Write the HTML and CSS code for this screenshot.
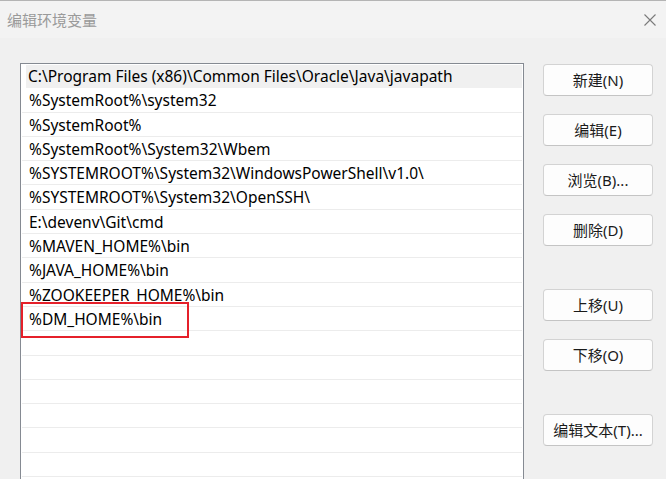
FILE: index.html
```html
<!DOCTYPE html>
<html lang="zh-CN">
<head>
<meta charset="utf-8">
<title>编辑环境变量</title>
<link rel="stylesheet" href="styles.css">
</head>
<body>
<div class="window">
  <div class="titlebar">
    <span class="title">编辑环境变量</span>
    <span class="close" aria-label="关闭">
      <svg width="12" height="12" viewBox="0 0 12 12"><path d="M0.5 0.5 L11.5 11.5 M11.5 0.5 L0.5 11.5" stroke="#7a7a7a" stroke-width="1.1" fill="none"/></svg>
    </span>
  </div>
  <div class="content">
    <div class="list">
      <div class="row selected">C:\Program Files (x86)\Common Files\Oracle\Java\javapath</div>
      <div class="row">%SystemRoot%\system32</div>
      <div class="row">%SystemRoot%</div>
      <div class="row">%SystemRoot%\System32\Wbem</div>
      <div class="row">%SYSTEMROOT%\System32\WindowsPowerShell\v1.0\</div>
      <div class="row">%SYSTEMROOT%\System32\OpenSSH\</div>
      <div class="row">E:\devenv\Git\cmd</div>
      <div class="row">%MAVEN_HOME%\bin</div>
      <div class="row">%JAVA_HOME%\bin</div>
      <div class="row">%ZOOKEEPER_HOME%\bin</div>
      <div class="row">%DM_HOME%\bin</div>
      <div class="row"></div>
      <div class="row"></div>
      <div class="row"></div>
      <div class="row"></div>
      <div class="row"></div>
      <div class="row"></div>
      <div class="highlight-box"></div>
    </div>
    <div class="buttons">
      <div class="group">
        <button class="btn">新建(N)</button>
        <button class="btn">编辑(E)</button>
        <button class="btn">浏览(B)...</button>
        <button class="btn">删除(D)</button>
      </div>
      <div class="group">
        <button class="btn">上移(U)</button>
        <button class="btn">下移(O)</button>
      </div>
      <div class="group">
        <button class="btn">编辑文本(T)...</button>
      </div>
    </div>
  </div>
</div>
</body>
</html>
```

FILE: styles.css
```css
html, body {
  margin: 0;
  padding: 0;
  background: #f0f0f0;
  overflow: hidden;
}

.window {
  width: 666px;
  height: 479px;
  background: #f0f0f0;
  font-family: "Noto Sans", "Noto Sans CJK SC", sans-serif;
  overflow: hidden;
  box-sizing: border-box;
  border-top: 1px solid #b4b4b4;
}

.titlebar {
  height: 37px;
  background: #f3f3f3;
  display: flex;
  align-items: center;
  justify-content: space-between;
  padding: 0 10px 0 7px;
}

.title {
  font-family: "Noto Sans CJK SC", sans-serif;
  font-size: 15px;
  color: #9a9a9a;
  margin-top: -1px;
}

.close {
  display: flex;
  width: 12px;
  height: 12px;
}

.content {
  display: flex;
  align-items: flex-start;
  padding: 25px 0 0 20px;
}

.list {
  position: relative;
  width: 502px;
  height: 460px;
  background: #ffffff;
  border: 1px solid #858a92;
  padding: 0 0 0 0;
  flex: none;
}

.row {
  height: 24.3px;
  box-sizing: border-box;
  border-bottom: 1px solid #ececec;
  margin: 0 1px;
  padding-left: 7px;
  font-size: 15.5px;
  line-height: 24px;
  color: #000;
  white-space: nowrap;
}

.row.selected {
  background: #f0f0f0;
  margin-left: 5px;
  padding-left: 2px;
  border-top: 1px solid #ffffff;
  border-bottom-color: #f0f0f0;
  line-height: 22px;
}

.highlight-box {
  position: absolute;
  left: 0;
  top: 238px;
  width: 168px;
  height: 36px;
  border: 2px solid #e5202a;
  box-sizing: border-box;
}

.buttons {
  display: flex;
  flex-direction: column;
  gap: 43px;
  margin-left: 19px;
  padding-top: 1px;
}

.group {
  display: flex;
  flex-direction: column;
  gap: 18px;
}

.btn {
  width: 110px;
  height: 32px;
  background: #fdfdfd;
  border: 1px solid #d3d3d3;
  border-bottom-color: #c4c4c4;
  border-radius: 4px;
  font-family: "Noto Sans", "Noto Sans CJK SC", sans-serif;
  font-size: 15px;
  color: #1a1a1a;
  padding: 0;
  line-height: 30px;
}
```
